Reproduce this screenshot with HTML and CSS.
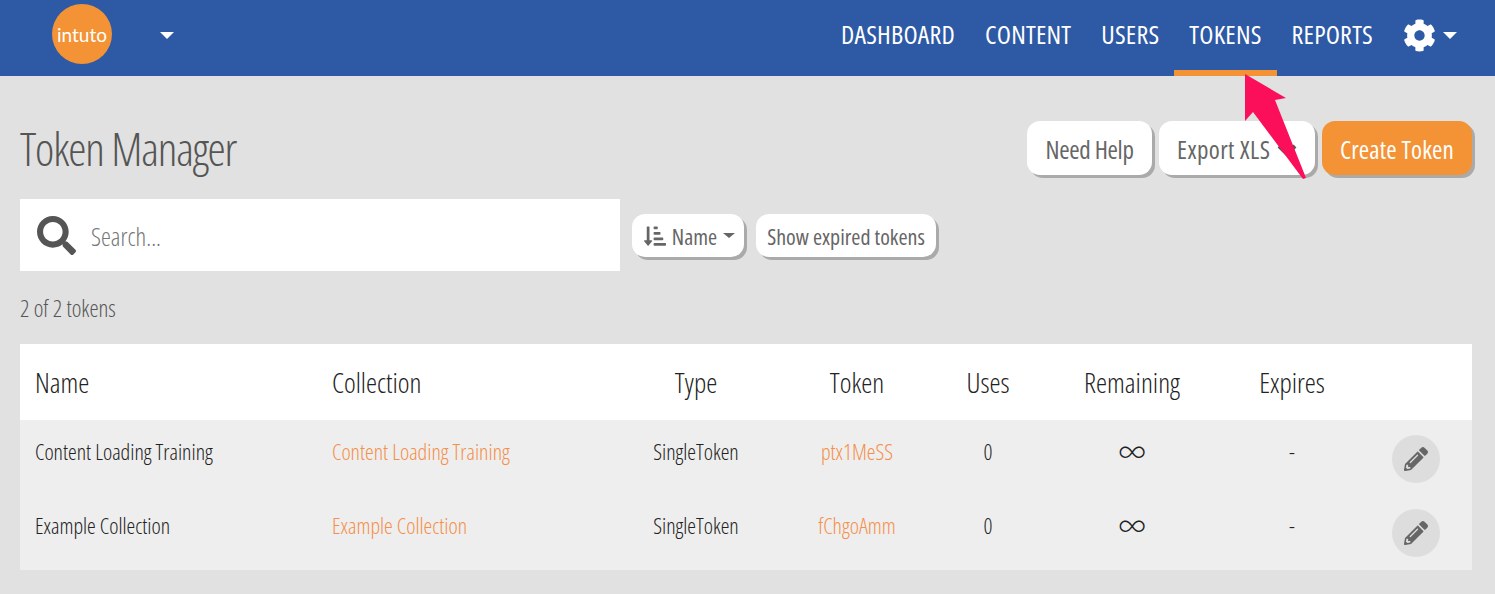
FILE: index.html
```html
<!DOCTYPE html>
<html lang="en">
<head>
<meta charset="utf-8">
<title>Token Manager</title>
<link rel="stylesheet" href="styles.css">
</head>
<body>
<header class="topbar">
  <div class="brand">
    <div class="logo"><span>intuto</span></div>
    <span class="caret caret-lg"></span>
  </div>
  <nav class="nav">
    <a class="nav-link">DASHBOARD</a>
    <a class="nav-link">CONTENT</a>
    <a class="nav-link">USERS</a>
    <a class="nav-link active">TOKENS</a>
    <a class="nav-link">REPORTS</a>
    <a class="nav-gear">
      <svg class="gear" viewBox="0 0 512 512"><path fill="currentColor" d="M487.4 315.700l-42.600-24.600c4.300-23.200 4.300-47 0-70.200l42.600-24.600c4.900-2.800 7.100-8.600 5.500-14-11.100-35.600-30-67.800-54.700-94.600-3.800-4.100-10-5.100-14.800-2.300L381.200 110c-17.900-15.400-38.500-27.300-60.800-35.100V25.800c0-5.600-3.900-10.500-9.400-11.700-36.700-8.200-74.300-7.800-109.200 0-5.500 1.200-9.400 6.100-9.400 11.700V75c-22.200 7.900-42.800 19.800-60.800 35.100L88.700 85.500c-4.900-2.800-11-1.900-14.800 2.300-24.700 26.700-43.600 58.900-54.700 94.600-1.700 5.400.6 11.200 5.500 14L67.300 221c-4.300 23.200-4.300 47 0 70.200l-42.600 24.600c-4.900 2.800-7.100 8.600-5.500 14 11.100 35.600 30 67.800 54.700 94.600 3.800 4.100 10 5.100 14.800 2.300l42.600-24.600c17.900 15.400 38.500 27.300 60.800 35.100v49.200c0 5.600 3.900 10.500 9.400 11.700 36.700 8.200 74.300 7.800 109.200 0 5.500-1.200 9.400-6.100 9.400-11.700v-49.200c22.200-7.900 42.800-19.800 60.800-35.100l42.600 24.600c4.900 2.800 11 1.900 14.800-2.300 24.700-26.700 43.600-58.900 54.700-94.600 1.500-5.500-.7-11.300-5.600-14.100zM256 336c-44.100 0-80-35.900-80-80s35.900-80 80-80 80 35.900 80 80-35.900 80-80 80z"/></svg>
      <span class="caret caret-lg"></span>
    </a>
  </nav>
</header>

<main class="page">
  <div class="title-row">
    <h1 class="title">Token Manager</h1>
    <div class="actions">
      <button class="btn btn-lg btn-help">Need Help</button>
      <button class="btn btn-lg btn-export">Export XLS
        <svg class="chev" viewBox="0 0 20 12"><polyline points="2,2 10,10 18,2" fill="none" stroke="currentColor" stroke-width="4"/></svg>
      </button>
      <button class="btn btn-lg btn-primary">Create Token</button>
    </div>
  </div>

  <div class="filter-row">
    <label class="search">
      <svg class="search-icon" viewBox="0 0 512 512"><path fill="currentColor" d="M505 442.700L405.300 343c-4.500-4.500-10.600-7-17-7H372c27.600-35.300 44-79.700 44-128C416 93.100 322.900 0 208 0S0 93.100 0 208s93.100 208 208 208c48.300 0 92.700-16.400 128-44v16.300c0 6.400 2.500 12.500 7 17l99.700 99.700c9.400 9.400 24.600 9.400 33.900 0l28.300-28.300c9.400-9.400 9.400-24.600.1-34zM208 336c-70.700 0-128-57.200-128-128 0-70.700 57.200-128 128-128 70.700 0 128 57.200 128 128 0 70.700-57.200 128-128 128z"/></svg>
      <span class="search-text">Search...</span>
    </label>
    <button class="btn btn-sm btn-sort">
      <svg class="sort-icon" viewBox="0 0 512 512"><path fill="currentColor" d="M240 96h64a16 16 0 0 0 16-16V48a16 16 0 0 0-16-16h-64a16 16 0 0 0-16 16v32a16 16 0 0 0 16 16zm0 128h128a16 16 0 0 0 16-16v-32a16 16 0 0 0-16-16H240a16 16 0 0 0-16 16v32a16 16 0 0 0 16 16zm256 192H240a16 16 0 0 0-16 16v32a16 16 0 0 0 16 16h256a16 16 0 0 0 16-16v-32a16 16 0 0 0-16-16zm-256-64h192a16 16 0 0 0 16-16v-32a16 16 0 0 0-16-16H240a16 16 0 0 0-16 16v32a16 16 0 0 0 16 16zm-64 0h-48V48a16 16 0 0 0-16-16H80a16 16 0 0 0-16 16v304H16c-14.190 0-21.370 17.240-11.290 27.310l80 96a16 16 0 0 0 22.620 0l80-96C197.250 369.260 190.080 352 176 352z"/></svg>
      Name <span class="caret caret-sm"></span>
    </button>
    <button class="btn btn-sm btn-expired">Show expired tokens</button>
  </div>

  <p class="count">2 of 2 tokens</p>

  <table class="tokens">
    <colgroup>
      <col class="c-name"><col class="c-coll"><col class="c-type"><col class="c-token"><col class="c-uses"><col class="c-rem"><col class="c-exp"><col class="c-edit">
    </colgroup>
    <thead>
      <tr>
        <th class="left">Name</th><th class="left">Collection</th><th>Type</th><th>Token</th><th>Uses</th><th>Remaining</th><th>Expires</th><th></th>
      </tr>
    </thead>
    <tbody>
      <tr>
        <td class="left">Content Loading Training</td>
        <td class="left link">Content Loading Training</td>
        <td>SingleToken</td>
        <td class="link">ptx1MeSS</td>
        <td>0</td>
        <td class="inf">∞</td>
        <td>-</td>
        <td class="edit-cell"><button class="edit"><svg viewBox="0 0 512 512"><path fill="currentColor" d="M497.900 142.100l-46.100 46.100c-4.700 4.700-12.300 4.700-17 0l-111-111c-4.700-4.700-4.700-12.300 0-17l46.100-46.100c18.700-18.700 49.100-18.700 67.900 0l60.100 60.100c18.800 18.700 18.800 49.100 0 67.900zM284.200 99.800L21.600 362.400.4 483.900c-2.900 16.400 11.400 30.600 27.800 27.800l121.500-21.300 262.600-262.600c4.700-4.700 4.700-12.300 0-17l-111-111c-4.800-4.700-12.400-4.700-17.100 0zM124.100 339.900c-5.500-5.500-5.500-14.300 0-19.800l154-154c5.500-5.500 14.300-5.500 19.800 0s5.500 14.300 0 19.800l-154 154c-5.500 5.500-14.300 5.500-19.800 0zM88 424h48v36.300l-64.500 11.300-31.100-31.100L51.700 376H88v48z"/></svg></button></td>
      </tr>
      <tr>
        <td class="left">Example Collection</td>
        <td class="left link">Example Collection</td>
        <td>SingleToken</td>
        <td class="link">fChgoAmm</td>
        <td>0</td>
        <td class="inf">∞</td>
        <td>-</td>
        <td class="edit-cell"><button class="edit"><svg viewBox="0 0 512 512"><path fill="currentColor" d="M497.900 142.100l-46.100 46.100c-4.700 4.700-12.300 4.700-17 0l-111-111c-4.700-4.700-4.700-12.300 0-17l46.100-46.100c18.700-18.700 49.100-18.700 67.900 0l60.100 60.100c18.800 18.700 18.800 49.100 0 67.900zM284.200 99.800L21.600 362.400.4 483.900c-2.900 16.400 11.400 30.600 27.800 27.800l121.500-21.300 262.600-262.600c4.700-4.700 4.700-12.300 0-17l-111-111c-4.800-4.700-12.400-4.700-17.100 0zM124.100 339.900c-5.500-5.500-5.500-14.300 0-19.800l154-154c5.500-5.500 14.300-5.500 19.800 0s5.500 14.300 0 19.800l-154 154c-5.500 5.500-14.300 5.500-19.800 0zM88 424h48v36.300l-64.500 11.300-31.100-31.100L51.700 376H88v48z"/></svg></button></td>
      </tr>
    </tbody>
  </table>
</main>

<svg class="annotation" viewBox="0 0 80 120"><polygon points="5,14 46,38 35,40 66,118 63,119 13,52 5,61" fill="#fb0f5a"/></svg>
```

FILE: styles.css
```css
* { box-sizing: border-box; }
html, body { margin: 0; }
body {
  height: 594px;
  overflow: hidden;
  background: #e1e1e1;
  color: #555;
  font-family: "Open Sans", sans-serif;
  font-stretch: 75%;
  font-weight: 300;
  position: relative;
}
.topbar {
  height: 76px;
  background: #2d59a5;
  color: #fff;
  display: flex;
  justify-content: space-between;
  padding: 0 38px 0 52px;
}
.brand { display: flex; align-items: flex-start; gap: 48px; padding-top: 4px; }
.brand .caret { margin-top: 28px; }
.logo {
  width: 60px; height: 60px; border-radius: 50%;
  background: #f39336; color: #fff;
  display: flex; align-items: center; justify-content: center;
  font-family: "Lato", sans-serif; font-size: 19px; font-stretch: normal; font-weight: 400;
}
.caret { display: inline-block; width: 0; height: 0; border-style: solid; border-color: currentColor transparent transparent; }
.caret-lg { border-width: 7px 7px 0; }
.caret-sm { border-width: 5px 6px 0; }
.nav { display: flex; align-items: stretch; }
.nav-link {
  display: flex; align-items: center; justify-content: center;
  padding: 0 15px 3px;
  font-size: 26px; font-weight: 450; letter-spacing: .2px;
  border-bottom: 6px solid transparent;
}
.nav-link.active { border-bottom-color: #f39336; }
.nav-gear { display: flex; align-items: center; gap: 7px; padding: 0 0 6px 15px; }
.gear { width: 33px; height: 33px; }
.page { padding: 45px 23px 0 20px; }
.title-row { display: flex; justify-content: space-between; align-items: center; height: 54px; }
.title { margin: 0; font-weight: 300; font-size: 46px; letter-spacing: -1.15px; color: #555; }
.actions { display: flex; gap: 7px; }
.btn {
  border: 0; background: #fff; color: #666;
  font-family: inherit; font-stretch: inherit; font-weight: 400;
  white-space: nowrap;
  box-shadow: 3px 3px 0 #aaa;
  border-radius: 13px;
  display: inline-flex; align-items: center; justify-content: center;
}
.btn-lg { height: 54px; font-size: 25px; padding: 2px 0 0; }
.btn-help { width: 125px; letter-spacing: -.3px; }
.btn-export { width: 156px; justify-content: flex-start; padding: 2px 0 0 18px; gap: 7px; letter-spacing: .4px; }
.btn-primary { width: 150px; background: #f39336; color: #fff; letter-spacing: .15px; }
.chev { width: 20px; height: 12px; color: #555; flex: none; margin-top: 1px; }
.filter-row { display: flex; align-items: center; gap: 12px; margin-top: 24px; }
.search {
  width: 600px; height: 72px; background: #fff;
  display: flex; align-items: center; gap: 15px; padding-left: 17px;
  color: #777; font-size: 25px;
}
.search-text { padding-top: 2px; }
.search-icon { width: 39px; height: 39px; color: #555; flex: none; }
.btn-sm { height: 43px; font-size: 22px; gap: 6px; padding: 1px 0 0; }
.btn-sort { width: 112px; padding-left: 3px; }
.btn-expired { width: 180px; }
.sort-icon { width: 22px; height: 22px; flex: none; }
.count { margin: 24px 0 0; font-size: 23px; color: #555; line-height: 26px; }
.tokens {
  width: 1452px; margin-top: 23px;
  table-layout: fixed; border-collapse: collapse;
  color: #222;
}
.c-name { width: 297px; } .c-coll { width: 297px; } .c-type { width: 164px; } .c-token { width: 158px; }
.c-uses { width: 104px; } .c-rem { width: 184px; } .c-exp { width: 136px; } .c-edit { width: 112px; }
.tokens thead tr { height: 76px; background: #fff; }
.tokens th { font-weight: 300; font-size: 28px; text-align: center; padding: 0; }
.tokens tbody tr { height: 76px; background: #eee; }
.tokens tbody tr:first-child { height: 74px; }
.tokens td { font-size: 22px; font-weight: 350; text-align: center; padding: 16px 0 0; vertical-align: top; line-height: 30px; }
.tokens .left { text-align: left; padding-left: 15px; }
.tokens .link { color: #f58f4a; }
.tokens .inf { font-family: "Inter", sans-serif; font-stretch: normal; font-weight: 200; font-size: 32px; line-height: 30px; }
.tokens .edit-cell { padding-top: 15px; }
.edit {
  width: 48px; height: 48px; border: 0; border-radius: 50%; background: #ddd; color: #666;
  display: inline-flex; align-items: center; justify-content: center; padding: 0;
}
.edit svg { width: 24px; height: 24px; }
.annotation { position: absolute; left: 1240px; top: 60px; width: 80px; height: 120px; }
```
